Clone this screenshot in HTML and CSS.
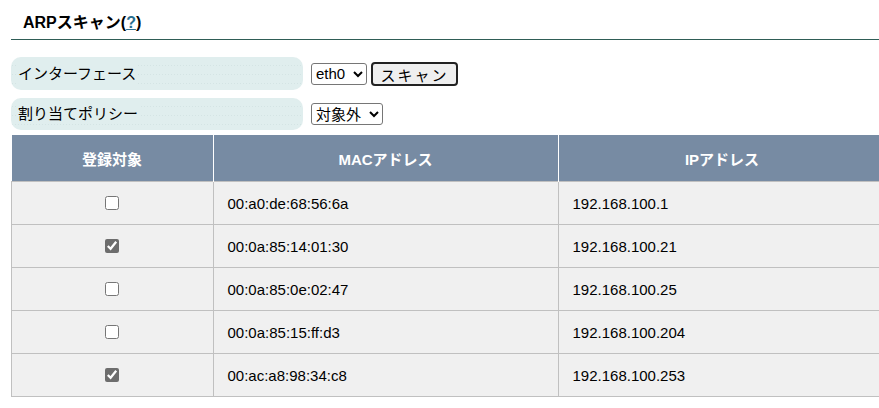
FILE: index.html
```html
<!DOCTYPE html>
<html lang="ja">
<head>
    <meta charset="UTF-8">
    <title>ARPスキャン</title>
    <link rel="stylesheet" href="styles.css">
</head>
<body>
    <div class="container">
        <h2 class="title">ARPスキャン(<a href="#">?</a>)</h2>

        <div class="field">
            <div class="label"><span>インターフェース</span></div>
            <div class="control">
                <select class="sel-if"><option>eth0</option></select>
                <button type="button">スキャン</button>
            </div>
        </div>
        <div class="field">
            <div class="label"><span>割り当てポリシー</span></div>
            <div class="control">
                <select class="sel-policy"><option>対象外</option></select>
            </div>
        </div>

        <table class="arp">
            <tr><th class="c1">登録対象</th><th class="c2">MACアドレス</th><th class="c3">IPアドレス</th></tr>
            <tr><td class="chk"><input type="checkbox"></td><td>00:a0:de:68:56:6a</td><td>192.168.100.1</td></tr>
            <tr><td class="chk"><input type="checkbox" checked></td><td>00:0a:85:14:01:30</td><td>192.168.100.21</td></tr>
            <tr><td class="chk"><input type="checkbox"></td><td>00:0a:85:0e:02:47</td><td>192.168.100.25</td></tr>
            <tr><td class="chk"><input type="checkbox"></td><td>00:0a:85:15:ff:d3</td><td>192.168.100.204</td></tr>
            <tr><td class="chk"><input type="checkbox" checked></td><td>00:ac:a8:98:34:c8</td><td>192.168.100.253</td></tr>
        </table>
    </div>
</body>
</html>
```

FILE: styles.css
```css
html, body {
    overflow: hidden;
}
body {
    margin: 0;
    font-family: "Liberation Sans", Arial, "Noto Sans CJK JP", sans-serif;
    color: #000;
    background: #fff;
}
.container {
    padding-left: 11px;
}
.title {
    margin: 0;
    padding: 13px 0 6px 12px;
    font-size: 16px;
    line-height: 20px;
    font-weight: bold;
    border-bottom: 1px solid #2f5d56;
}
.title a {
    color: #2a6f8f;
}
.field {
    display: flex;
    align-items: center;
    gap: 8px;
    margin-top: 8px;
}
.field:first-of-type {
    margin-top: 17px;
}
.label {
    width: 285px;
    height: 33px;
    padding-left: 7px;
    display: flex;
    align-items: center;
    border-radius: 10px;
    background-color: #e0eeee;
    background-image: radial-gradient(circle, #d4e4e4 0.5px, transparent 0.8px);
    background-size: 3px 9px;
    background-position: 0 4px;
    font-size: 15px;
    line-height: 20px;
}
.label span {
    background: #e0eeee;
    padding-right: 2px;
}
.field + .field .label {
    height: 32px;
}
.control {
    display: flex;
    align-items: center;
    gap: 4px;
}
select {
    font-family: inherit;
    font-size: 15px;
    height: 22px;
    padding: 0;
    border: 1px solid #767676;
    border-radius: 3px;
    background: #fff;
    color: #000;
}
.sel-if {
    width: 56px;
}
.sel-policy {
    width: 72px;
}
button {
    font-family: inherit;
    font-size: 15px;
    width: 87px;
    height: 24px;
    padding: 0;
    border: 2px solid #222;
    border-radius: 4px;
    background: #efefef;
    color: #000;
    letter-spacing: 2px;
}
table.arp {
    margin-top: 5px;
    width: 875px;
    border-collapse: collapse;
    font-size: 15px;
}
.arp th {
    height: 46px;
    padding: 0;
    background: #778ba3;
    color: #fff;
    font-weight: bold;
    border-left: 1px solid #fff;
    text-align: center;
}
.arp th.c1 {
    border-left: none;
    width: 201px;
}
.arp th.c2 {
    width: 344px;
}
.arp td {
    height: 42px;
    padding: 0 0 0 14px;
    background: #f0f0f0;
    border: 1px solid #c0c0c0;
}
.arp td.chk {
    text-align: center;
    padding: 0;
}
.chk input {
    width: 14px;
    height: 14px;
    margin: 3px 0 0 0;
    accent-color: #6d6d6d;
}
```
